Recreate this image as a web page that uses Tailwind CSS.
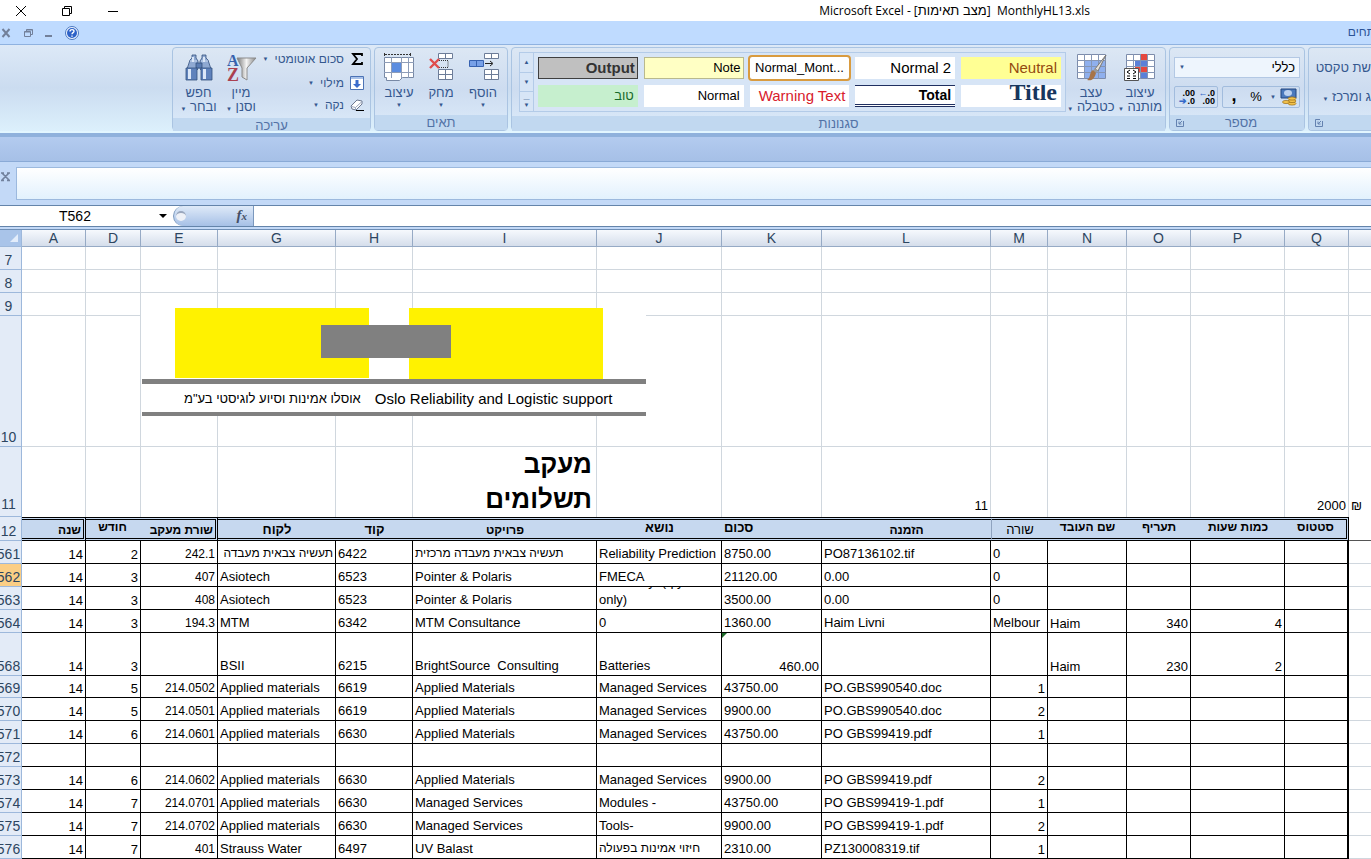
<!DOCTYPE html>
<html lang="he">
<head>
  <meta charset="UTF-8" />
  <meta name="viewport" content="width=device-width, initial-scale=1.0" />
  <title>Microsoft Excel - MonthlyHL13.xls</title>
  <script src="https://cdn.jsdelivr.net/npm/@tailwindcss/browser@4"></script>
</head>
<body class="min-h-screen overflow-x-hidden bg-[#c3d9f7] font-['Liberation_Sans','Noto_Sans',sans-serif] text-[13px] leading-[15px] text-black">

  <!-- Title bar -->
  <header class="flex h-[21px] items-center bg-white">
    <div class="flex items-center gap-[34px] pl-[15px]">
      <button aria-label="Close"><svg class="h-3 w-3" viewBox="0 0 12 12" fill="none" stroke="#000"><path d="M1 1l10 10M11 1L1 11" /></svg></button>
      <button aria-label="Restore"><svg class="h-3 w-3" viewBox="0 0 12 12" fill="none" stroke="#000"><path d="M1.500 3.500h7v7h-7zM3.500 3.500v-2h7v7h-2" /></svg></button>
      <button aria-label="Minimize"><svg class="h-3 w-3" viewBox="0 0 12 12" fill="none" stroke="#000"><path d="M1 6.500h10" /></svg></button>
    </div>
    <h1 class="flex-1 whitespace-pre pr-[281px] text-right font-['Open_Sans','DejaVu_Sans',sans-serif] text-[12px]">Microsoft Excel - [<span class="font-['Liberation_Sans',sans-serif] text-[13px]">מצב תאימות</span>]  MonthlyHL13.xls</h1>
  </header>

  <!-- Tab strip -->
  <nav class="flex h-6 items-center justify-between border-b border-[#8fb2e0] bg-[#bfdbff]">
    <div class="flex items-center">
      <button aria-label="Close workbook" class="mr-3"><svg class="h-3 w-3" viewBox="0 0 12 12" fill="none" stroke="#72809a" stroke-width="2"><path d="M2.500 2l7 8M9.500 2l-7 8" /></svg></button>
      <button aria-label="Restore workbook" class="mr-3"><svg class="h-2 w-[9px]" viewBox="0 0 9 8" fill="none" stroke="#72809a"><path d="M.5 2.500h6v5h-6zM.5 3h6M2.500 2V.5h6v5h-2M2.500 1h6" /></svg></button>
      <button aria-label="Minimize workbook" class="mr-3"><svg class="h-3 w-2" viewBox="0 0 8 12" stroke="#72809a" stroke-width="2"><path d="M0 9h7" /></svg></button>
      <button aria-label="Help"><svg class="h-[14px] w-[14px]" viewBox="0 0 14 14"><circle cx="7" cy="7" r="6.500" fill="#eef5ff" stroke="#4b78c0" /><circle cx="7" cy="7" r="5" fill="#2d62c8" /><path d="M5 5.500c0-2.600 4-2.400 4-.2 0 1.500-2 1.300-2 3M7 9.500v1.300" fill="none" stroke="#fff" stroke-width="1.400" /></svg></button>
    </div>
    <a href="#" dir="rtl" class="-mr-1 text-[12px] text-[#2b5397]">תחים</a>
  </nav>

  <!-- Ribbon -->
  <section class="flex h-[88px] items-start justify-end gap-[3px] overflow-hidden border-b-2 border-[#e2f6ff] bg-linear-to-b from-[#dde9f7] via-[#cbdcf0] to-[#dcf0fc] pt-0.5 text-[#35588f]">

    <div class="flex h-[84px] w-[199px] flex-none flex-col rounded-sm border border-[#aac4e2] bg-linear-to-b from-[#dce7f4] via-[#cddcf0] to-[#dcebfa]">
      <div class="flex flex-1 pl-1 pt-1">
        <button class="flex w-[43px] flex-col items-center">
          <svg class="h-8 w-8" viewBox="0 0 32 32"><g stroke="#33517f" stroke-width=".8"><path d="M9 3h4v3l2 3v8l-2 2H5l-1-2 3-9 2-2zM19 3h4v3l2 2 3 9-1 2h-8l-2-2V9l2-3z" fill="#8fa9d2" /><path d="M13 11h6v5h-6z" fill="#5c7db3" /><path d="M3 16h11v12H3zM18 16h11v12H18z" fill="#5f82bc" /><path d="M7 9h7M18 9h7" stroke="#dce8fa" /></g><path d="M5 17h3v10H5zM20 17h3v10h-3zM9 5h2v5H9zM20 5h2v5h-2z" fill="#dbe7f8" /></svg>
          <span class="mt-0.5 whitespace-nowrap leading-[14px]" dir="rtl">חפש<br />ובחר <small class="text-[6px]">▼</small></span>
        </button>
        <button class="flex w-[42px] flex-col items-center">
          <svg class="h-8 w-8" viewBox="0 0 32 32"><defs><linearGradient id="funnel"><stop offset="0" stop-color="#777" /><stop offset=".5" stop-color="#f4f4f4" /><stop offset="1" stop-color="#858585" /></linearGradient></defs><path d="M12 6h19l-9 10v12l-5-3v-9z" fill="url(#funnel)" stroke="#8b8b8b" /><text x="2" y="14" font-family="Liberation Serif" font-weight="700" font-size="16" fill="#3762ad">A</text><text x="2" y="29" font-family="Liberation Serif" font-weight="700" font-size="18" fill="#aa4050">Z</text></svg>
          <span class="mt-0.5 whitespace-nowrap leading-[14px]" dir="rtl">מיין<br />וסנן <small class="text-[6px]">▼</small></span>
        </button>
        <div class="flex flex-1 flex-col whitespace-nowrap pr-1.5 text-[12px]" dir="rtl">
          <button class="flex h-[22px] items-center gap-1.5 pb-2"><svg class="h-[14px] w-[14px]" viewBox="0 0 14 14" fill="none" stroke="#000" stroke-width="1.800"><path d="M12 4V2H3l4 5-4 5h9v-2" /></svg>סכום אוטומטי <small class="text-[6px]">▼</small></button>
          <button class="flex h-[22px] items-center gap-1.5 pb-1"><svg class="h-[14px] w-[14px]" viewBox="0 0 14 14"><path d="M.5.5h13v13H.5z" fill="#fff" stroke="#4c73b5" /><path d="M1 1h12v2H1z" fill="#a9c2e9" /><path d="M5.500 4h3v4H11l-4 4-4-4h2.500z" fill="#3b6ccc" /></svg>מילוי <small class="text-[6px]">▼</small></button>
          <button class="flex h-[22px] items-center gap-1.5 pb-1"><svg class="h-[14px] w-[14px]" viewBox="0 0 14 14"><path d="M1 8l6-6 5 1v3l-6 6-4-1z" fill="#fff" stroke="#6d7890" /><path d="M1.500 8.500l4 1L12 3.500M5.500 9.500V12" fill="none" stroke="#9aa6bd" /><path d="M6 12.500h8" stroke="#000" /></svg>נקה <small class="text-[6px]">▼</small></button>
        </div>
      </div>
      <h2 class="h-[15px] bg-[#c1d8f0] text-center text-[#5272a6]">עריכה</h2>
    </div>

    <div class="flex h-[84px] w-[134px] flex-none flex-col rounded-sm border border-[#aac4e2] bg-linear-to-b from-[#dce7f4] via-[#cddcf0] to-[#dcebfa]">
      <div class="flex flex-1 gap-0.5 px-1 pt-1">
        <button class="flex w-10 flex-col items-center">
          <svg class="h-8 w-8" viewBox="0 0 32 32"><path d="M1.500 5.500h29v20h-11l-3 3h-13v-3h-2z" fill="#fff" stroke="#7889a5" /><path d="M1 10.500h30M1 20.500h30M8.500 5v21M18.500 5v21M25.500 5v21" stroke="#8e9db8" /><path d="M9 11h9v9H9z" fill="#5c8de0" /><path d="M2 2.500h25" stroke="#333" stroke-dasharray="2 1" /><path d="M1.500 1v3M27.500 1v3" stroke="#333" /></svg>
          <span class="mt-0.5 leading-[14px]">עיצוב</span><small class="text-[6px] leading-[11px]">▼</small>
        </button>
        <button class="flex w-10 flex-col items-center">
          <svg class="h-8 w-8" viewBox="0 0 32 32"><path d="M13.500 1.500h14v5h-14zM20.500 1v6M13.500 17.500h14v10h-14zM13 22.500h15M20.500 17v11" fill="#fff" stroke="#6c7c98" /><path d="M14 8.500h9v7h-9" fill="none" stroke="#333" stroke-dasharray="1 1" /><path d="M5 7l9 9M14 7l-9 9" stroke="#df4c4c" stroke-width="2.400" /></svg>
          <span class="mt-0.5 leading-[14px]">מחק</span><small class="text-[6px] leading-[11px]">▼</small>
        </button>
        <button class="flex w-10 flex-col items-center">
          <svg class="h-8 w-8" viewBox="0 0 32 32"><path d="M17.500 1.500h14v5h-14zM24.500 1v6M17.500 17.500h14v10h-14zM17 22.500h15M24.500 17v11" fill="#fff" stroke="#6c7c98" /><path d="M2.500 8.500h14v6h-14zM9.500 8v7" fill="#77a0e8" stroke="#3661b0" /><path d="M18 11.500h7M23 9l3 2.500-3 2.500" fill="none" stroke="#222" /></svg>
          <span class="mt-0.5 leading-[14px]">הוסף</span><small class="text-[6px] leading-[11px]">▼</small>
        </button>
      </div>
      <h2 class="h-[15px] bg-[#c1d8f0] text-center text-[#5272a6]">תאים</h2>
    </div>

    <div class="flex h-[84px] w-[655px] flex-none flex-col rounded-sm border border-[#aac4e2] bg-linear-to-b from-[#dce7f4] via-[#cddcf0] to-[#dcebfa]">
      <div class="flex flex-1 pl-[7px] pt-1">
        <div class="flex h-[60px] w-[547px] border border-[#b3cbe8] bg-[#d7e5f6]">
          <div class="flex w-[14px] flex-col border-r border-[#b3cbe8] text-[6px] leading-[6px]">
            <button class="flex-1 border-b border-[#b3cbe8]" aria-label="Scroll up">▲</button>
            <button class="flex-1 border-b border-[#b3cbe8]" aria-label="Scroll down">▼</button>
            <button class="flex-1" aria-label="More styles">―<br />▼</button>
          </div>
          <div class="grid flex-1 grid-cols-5 grid-rows-[22px_22px] gap-1.5 px-1 pt-[4px] text-[15px] leading-[20px] text-black">
            <button class="border border-[#3f3f3f] bg-[#c0c0c0] px-0.5 text-right font-bold leading-[18px] text-[#333]">Output</button>
            <button class="border border-[#b9b98e] bg-[#ffffc4] px-0.5 text-right text-[13px]">Note</button>
            <button class="rounded-xs bg-white px-0.5 text-center text-[13px] outline-2 outline-[#d99b3f]">Normal_Mont...</button>
            <button class="bg-white px-1 text-right">Normal 2</button>
            <button class="bg-[#ffff94] px-1 text-right text-[#944a10]">Neutral</button>
            <button class="bg-[#c6efce] px-1 text-right text-[13px] text-[#17692a]">טוב</button>
            <button class="bg-white px-1 text-right text-[13px]">Normal</button>
            <button class="bg-white px-1 text-right text-[#d8202c]">Warning Text</button>
            <button class="border-b-3 border-t border-double border-[#1f2f60] bg-white px-1 text-right text-[14px] font-bold leading-[18px]">Total</button>
            <button class="flex items-start justify-end overflow-hidden bg-white px-1 font-['Liberation_Serif',serif] text-[24px] font-bold leading-[14px] text-[#17365d]">Title</button>
          </div>
        </div>
        <button class="flex w-[50px] flex-col items-center">
          <svg class="h-8 w-8" viewBox="0 0 32 32"><path d="M2.500 2.500h28v24h-28z" fill="#fff" stroke="#7d8cab" /><path d="M9 8h21v18H9z" fill="#8fb0ee" /><path d="M2 8.500h29M2 14.500h29M2 20.500h29M9.500 2v25M16.500 2v25M23.500 2v25" stroke="#8596b5" /><path d="M31 3L20 17l3 2z" fill="#e6e1d8" stroke="#777" /><path d="M20 16l3 3-3 2-2-2z" fill="#999" /><path d="M18 18l3 3c-2 7-5 8-9 7 4-2 2-8 6-10z" fill="#a77448" /></svg>
          <span class="mt-0.5 whitespace-nowrap leading-[14px]" dir="rtl">עצב<br />כטבלה <small class="text-[6px]">▼</small></span>
        </button>
        <button class="flex w-[48px] flex-col items-center">
          <svg class="h-8 w-8" viewBox="0 0 32 32"><path d="M2.500 2.500h28v24h-28z" fill="#fff" stroke="#7d8cab" /><path d="M17 2h6v6h-6zM11 14h13v6H11z" fill="#e5483f" /><path d="M11 8h12v6H11zM17 20h6v6h-6z" fill="#5b80d8" /><path d="M2 8.500h29M2 14.500h29M2 20.500h29M9.500 2v25M16.500 2v25M23.500 2v25" stroke="#8596b5" /><path d="M.5 16.500h14v12H.5z" fill="#fff" stroke="#555" /><path d="M6 18l-3 2 3 2M3 24h3M3 26.500h3M9 18l3 2-3 2M9 24h3M9 26.500h3" fill="none" stroke="#000" /></svg>
          <span class="mt-0.5 whitespace-nowrap leading-[14px]" dir="rtl">עיצוב<br />מותנה <small class="text-[6px]">▼</small></span>
        </button>
      </div>
      <h2 class="h-[15px] bg-[#c1d8f0] text-center text-[#5272a6]">סגנונות</h2>
    </div>

    <div class="flex h-[84px] w-[136px] flex-none flex-col rounded-sm border border-[#aac4e2] bg-linear-to-b from-[#dce7f4] via-[#cddcf0] to-[#dcebfa]">
      <div class="flex flex-1 flex-col gap-2 px-1 pt-[9px] text-black">
        <button class="flex h-[21px] items-center justify-between border border-[#b3c8e4] bg-[#eef5fd] px-1" aria-label="Number format"><small class="text-[6px] text-[#35588f]">▼</small><span>כללי</span></button>
        <div class="flex h-[22px] gap-1 text-[9px] font-bold leading-[8px]">
          <div class="flex w-11 rounded-xs border border-[#a2bcdd] pr-0.5">
            <button class="flex-1 text-right">.00<br /><span class="text-[#3468c8]">➔</span>.0</button>
            <button class="flex-1 text-right"><span class="text-[#3468c8]">←</span>.0<br />.00</button>
          </div>
          <div class="flex flex-1 rounded-xs border border-[#a2bcdd] text-[13px] leading-[20px]">
            <button class="w-[22px] pb-1 text-[18px] leading-[8px]">,</button>
            <button class="w-[22px] font-normal">%</button>
            <button class="flex flex-1 items-center justify-end gap-1 pr-0.5" aria-label="Currency"><small class="text-[6px] font-normal text-[#35588f]">▼</small><svg class="h-[18px] w-[17px]" viewBox="0 0 17 18"><path d="M1 1h15v9H1z" fill="#4b79bd" stroke="#24477f" /><ellipse cx="8" cy="5" rx="4" ry="3" fill="#bcd1f0" /><g fill="#f2c24c" stroke="#9b6d14" stroke-width=".7"><ellipse cx="12" cy="15.500" rx="4" ry="1.600" /><ellipse cx="12" cy="13" rx="4" ry="1.600" /><ellipse cx="12" cy="10.500" rx="4" ry="1.600" /><ellipse cx="6" cy="14" rx="3.500" ry="1.600" /></g></svg></button>
          </div>
        </div>
      </div>
      <div class="flex h-[15px] items-center bg-[#c1d8f0] px-1.5 text-[#5272a6]">
        <button aria-label="Number options"><svg class="h-2 w-2" viewBox="0 0 8 8" fill="none" stroke="#6482b0"><path d="M7.500 2v5.500H.5v-7H5M6 2L3 5M3 2.500V5h2.500" /></svg></button>
        <h2 class="flex-1 text-center">מספר</h2>
      </div>
    </div>

    <div class="flex h-[84px] w-[63px] flex-none flex-col overflow-hidden rounded-l-sm border border-r-0 border-[#aac4e2] bg-linear-to-b from-[#dce7f4] via-[#cddcf0] to-[#dcebfa]">
      <div class="flex flex-1 flex-col items-end gap-[14px] whitespace-nowrap pt-3">
        <button dir="rtl">שת טקסט</button>
        <button dir="rtl">ג ומרכז <small class="text-[6px]">▼</small></button>
      </div>
      <div class="flex h-[15px] items-center bg-[#c1d8f0] px-1.5">
        <button aria-label="Alignment options"><svg class="h-2 w-2" viewBox="0 0 8 8" fill="none" stroke="#6482b0"><path d="M7.500 2v5.500H.5v-7H5M6 2L3 5M3 2.500V5h2.500" /></svg></button>
      </div>
    </div>
  </section>

  <div class="h-[29px] border-b border-t-4 border-[#8aaad6] border-t-[#8fb1dc] bg-linear-to-b from-[#b3cbef] to-[#a6c0e7]"></div>

  <!-- Message bar -->
  <div class="flex h-[43px] pt-[5px]">
    <button aria-label="Close message bar" class="h-4 w-4 flex-none pt-1"><svg class="h-[10px] w-[10px]" viewBox="0 0 10 10" fill="none" stroke="#71819d" stroke-width="1.600"><path d="M2 1l7 7M9 1L2 8M1 1h3M7 1h3M1 8.500h3M7 8.500h3" /></svg></button>
    <div class="h-[33px] flex-1 border border-r-0 border-[#9cb9de] bg-linear-to-b from-white to-[#e2f1fd]"></div>
  </div>

  <!-- Formula bar -->
  <div class="flex h-[22px] border-y border-[#6484aa] bg-white">
    <input aria-label="Name box" value="T562" class="w-[150px] text-center text-[14px] outline-none" />
    <button aria-label="Name list" class="w-[23px] text-center"><svg class="ml-[9px] h-1 w-2" viewBox="0 0 8 4"><path d="M0 0h8L4 4z" /></svg></button>
    <button aria-label="Insert function" class="flex w-[81px] items-center justify-between rounded-l-full border-r border-l border-[#7b98bd] bg-linear-to-b from-[#dfeaf8] to-[#a6c0e6] pl-0.5 pr-1.5"><span class="h-2.5 w-2.5 rounded-full border-t-2 border-[#9aa7bd] bg-[#eef1f7]"></span><span class="font-['Liberation_Serif',serif] text-[15px] font-bold italic text-[#454f66]">f<span class="text-[11px]">x</span></span></button>
    <input aria-label="Formula" class="min-w-0 flex-1 outline-none" />
  </div>

  <!-- Worksheet -->
  <table class="mt-0.5 w-full table-fixed border-separate border-spacing-0 whitespace-nowrap border-t border-[#6f8fb6] bg-white">
    <colgroup>
      <col class="w-[22px]" /><col class="w-[64px]" /><col class="w-[55px]" /><col class="w-[77px]" /><col class="w-[118px]" /><col class="w-[77px]" /><col class="w-[184px]" /><col class="w-[125px]" /><col class="w-[100px]" /><col class="w-[169px]" /><col class="w-[57px]" /><col class="w-[79px]" /><col class="w-[64px]" /><col class="w-[94px]" /><col class="w-[64px]" /><col />
    </colgroup>
    <thead id="letters"></thead>
    <tbody id="top"></tbody>
    <tbody>
      <tr class="bg-[#c6d8ef] align-bottom text-[12px] font-bold">
        <th class="h-6 border-b border-r border-[#9db8db] bg-[#e3ebf7] p-0"><div class="flex justify-center pr-1 pb-px text-[14px] font-normal text-[#2d4560]">12</div></th>
        <td class="border-y-3 border-r-3 border-double border-black px-0.5 py-0 text-right">שנה</td>
        <td class="border-y-3 border-double border-black p-0 pr-0.5 text-center align-top">חודש</td>
        <td class="border-y-3 border-r-3 border-double border-black px-0.5 py-0 text-right">שורת מעקב</td>
        <td class="border-y-3 border-double border-black p-0 text-center align-middle text-[13px]">לקוח</td>
        <td class="border-y-3 border-double border-black p-0 text-center align-middle text-[13px]">קוד</td>
        <td class="border-y-3 border-double border-black p-0 text-center">פרויקט</td>
        <td class="border-y-3 border-double border-black p-0 text-center align-top text-[13px]">נושא</td>
        <td class="border-y-3 border-double border-black px-0.5 py-0 text-left align-top text-[13px]">סכום</td>
        <td class="border-y-3 border-double border-black p-0 text-center">הזמנה</td>
        <td class="border-y-3 border-l border-double border-black border-l-[#8fa3bf] p-0 text-center align-middle text-[13px] font-normal">שורה</td>
        <td class="border-y-3 border-double border-black p-0 text-center align-top">שם העובד</td>
        <td class="border-y-3 border-double border-black p-0 text-center align-top">תעריף</td>
        <td class="border-y-3 border-double border-black p-0 text-center align-top">כמות שעות</td>
        <td class="border-y-3 border-r-3 border-double border-black p-0 text-center align-top">סטטוס</td>
        <td class="border-b border-[#555] bg-white p-0"></td>
      </tr>
    </tbody>
    <tbody id="rows"></tbody>
  </table>

  <template id="logo">
    <div class="absolute left-0 top-[-8px] z-10 h-[108px] w-[505px] bg-white">
      <svg class="block h-[76px] w-[505px]" viewBox="0 0 505 76"><path d="M34 0h194v70H34zM268 0h194v72H268z" fill="#fff200" /><path d="M180 17h130v33H180zM1 71h504v5H1z" fill="#808080" /></svg>
      <div class="ml-px flex h-[32px] items-center gap-[14px] border-b-4 border-[#808080] pl-[42px] text-[15px]"><span dir="rtl" class="text-[13px]">אוסלו אמינות וסיוע לוגיסטי בע"מ</span><span>Oslo Reliability and Logistic support</span></div>
    </div>
  </template>

  <script>
    const columns = ["A", "D", "E", "G", "H", "I", "J", "K", "L", "M", "N", "O", "P", "Q"];

    // number, row height class, cell contents by column letter
    const topRows = [
      [7, "h-[23px]", {}],
      [8, "h-[23px]", {}],
      [9, "h-[23px]", {}],
      [10, "h-[131px]", {}],
      [11, "h-[70px]", { L: "11", Q: "2000", R: "₪" }],
    ];

    const dataRows = [
      [561, "14", "2", "242.1", "תעשיה צבאית מעבדה", "6422", "תעשיה צבאית מעבדה מרכזית", "Reliability Prediction", "8750.00", "PO87136102.tif", "0", "", "", "", ""],
      [562, "14", "3", "407", "Asiotech", "6523", "Pointer & Polaris", "FMECA", "21120.00", "0.00", "0", "", "", "", ""],
      [563, "14", "3", "408", "Asiotech", "6523", "Pointer & Polaris", "Reliability &nbsp;(qty<br>only)", "3500.00", "0.00", "0", "", "", "", ""],
      [564, "14", "3", "194.3", "MTM", "6342", "MTM Consultance", "0", "1360.00", "Haim Livni", "Melbour", "Haim", "340", "4", ""],
      [568, "14", "3", "", "BSII", "6215", "BrightSource &nbsp;Consulting", "Batteries", "460.00", "", "", "Haim", "230", "2", ""],
      [569, "14", "5", "214.0502", "Applied materials", "6619", "Applied Materials", "Managed Services", "43750.00", "PO.GBS990540.doc", "1", "", "", "", ""],
      [570, "14", "5", "214.0501", "Applied materials", "6619", "Applied Materials", "Managed Services", "9900.00", "PO.GBS990540.doc", "2", "", "", "", ""],
      [571, "14", "6", "214.0601", "Applied materials", "6630", "Applied Materials", "Managed Services", "43750.00", "PO GBS99419.pdf", "1", "", "", "", ""],
      [572, "", "", "", "", "", "", "", "", "", "", "", "", "", ""],
      [573, "14", "6", "214.0602", "Applied materials", "6630", "Applied Materials", "Managed Services", "9900.00", "PO GBS99419.pdf", "2", "", "", "", ""],
      [574, "14", "7", "214.0701", "Applied materials", "6630", "Managed Services", "Modules -", "43750.00", "PO GBS99419-1.pdf", "1", "", "", "", ""],
      [575, "14", "7", "214.0702", "Applied materials", "6630", "Managed Services", "Tools-", "9900.00", "PO GBS99419-1.pdf", "2", "", "", "", ""],
      [576, "14", "7", "401", "Strauss Water", "6497", "UV Balast", "חיזוי אמינות בפעולה", "2310.00", "PZ130008319.tif", "1", "", "", "", ""],
    ];

    function rowHead(n) {
      const fill = n === 562 ? "bg-[#fbce85]" : "bg-[#e3ebf7]";
      const pad = n === 11 ? "pb-1" : "pb-px";
      return `<th class="overflow-hidden border-b border-r border-[#9db8db] p-0 align-bottom font-normal ${fill}"><div class="flex justify-center pr-1 ${pad} text-[14px] text-[#2d4560]">${n}</div></th>`;
    }

    document.getElementById("letters").innerHTML =
      `<tr class="bg-linear-to-b from-[#f6f9fd] to-[#d3dcea] text-[14px] text-[#2d4560]">
        <th class="h-[17px] border-b border-r border-[#9db8db] bg-[#a9c4e9] p-0"><svg class="ml-2 h-3 w-3" viewBox="0 0 12 12"><path d="M10 2v8H2z" fill="#e3edfb" /></svg></th>` +
      columns.map(c => `<th class="border-b border-r border-[#96aac5] p-0 text-center font-normal leading-4">${c}</th>`).join("") +
      `<th class="border-b border-[#96aac5] p-0"></th></tr>`;

    document.getElementById("top").innerHTML = topRows.map(([n, height, cells]) =>
      `<tr class="${height} align-bottom">${rowHead(n)}` +
      columns.concat("R").map(c => {
        if (n === 10 && c === "E") return `<td class="relative border-b border-r border-[#d0d7de] p-0">${document.getElementById("logo").innerHTML}</td>`;
        if (n === 11 && c === "I") return `<td class="border-r border-[#d0d7de] px-1 py-0 text-right text-[26px] font-bold leading-[35px]">מעקב<br>תשלומים</td>`;
        const bottom = n === 11 ? "" : "border-b";
        const side = c === "R" ? "text-left" : "border-r text-right";
        return `<td class="${bottom} ${side} border-[#d0d7de] px-0.5 pt-0 pb-[4px]">${cells[c] || ""}</td>`;
      }).join("") + `</tr>`).join("");

    document.getElementById("rows").innerHTML = dataRows.map(([n, ...cells]) => {
      const height = n === 568 ? "h-[43px]" : n === 569 ? "h-[22px]" : "h-[23px]";
      return `<tr class="${height}">${rowHead(n)}` + cells.map((text, i) => {
        const c = columns[i];
        const hebrew = /[א-ת]/.test(text);
        const low = "ADEOP".includes(c) || (c === "M" && n > 568) || (c === "K" && n === 568);
        const right = low || (c === "G" && hebrew);
        const size = hebrew || c === "E" ? "text-[12px]" : "";
        let box = low || c === "N" ? "pb-px" : "pb-0.5";
        if (n === 563 && c === "J") box = "flex h-[22px] items-end overflow-hidden leading-[18px]";
        const flag = n === 568 && c === "K" ? `<span class="absolute left-0 top-0 border-r-[5px] border-t-[5px] border-r-transparent border-t-[#1d6b2a]"></span>` : "";
        return `<td class="relative border-b border-r border-black px-0.5 py-0 align-bottom ${c === "Q" ? "border-r-2" : ""} ${right ? "text-right" : "text-left"} ${size}">${flag}<div class="${box}"><span>${text}</span></div></td>`;
      }).join("") + `<td class="border-b border-[#d0d7de] p-0"></td></tr>`;
    }).join("");
  </script>
</body>
</html>
